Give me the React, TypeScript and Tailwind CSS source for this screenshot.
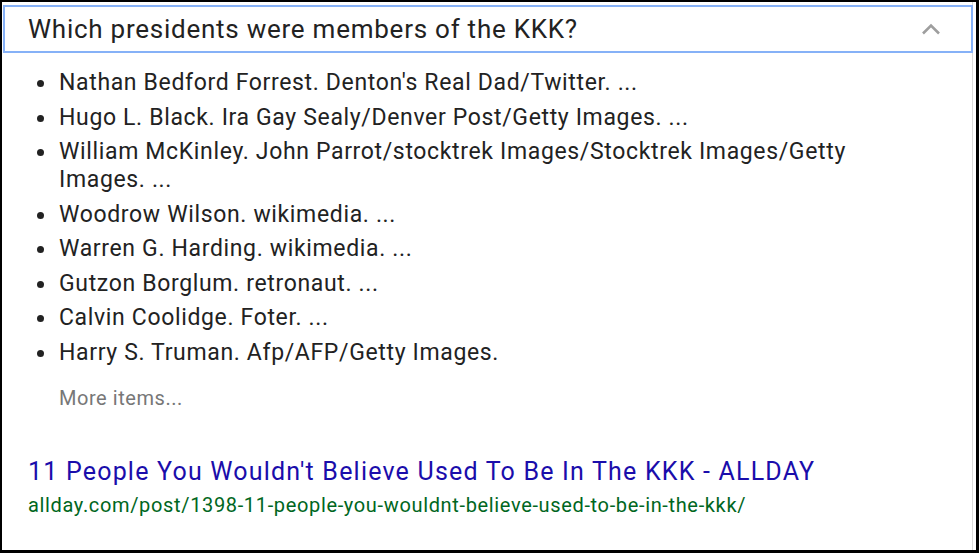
const items = [
  "Nathan Bedford Forrest. Denton's Real Dad/Twitter. ...",
  "Hugo L. Black. Ira Gay Sealy/Denver Post/Getty Images. ...",
  "William McKinley. John Parrot/stocktrek Images/Stocktrek Images/Getty Images. ...",
  "Woodrow Wilson. wikimedia. ...",
  "Warren G. Harding. wikimedia. ...",
  "Gutzon Borglum. retronaut. ...",
  "Calvin Coolidge. Foter. ...",
  "Harry S. Truman. Afp/AFP/Getty Images.",
];

function ChevronUp() {
  return (
    <svg width="20" height="12" viewBox="0 0 20 12" fill="none">
      <path d="M2 10.5 L10 2.5 L18 10.5" stroke="#9e9e9e" strokeWidth="2.6" />
    </svg>
  );
}

export default function App() {
  return (
    <div
      className="w-[979px] h-[553px] bg-white border-black border-t-2 border-l-2 border-r-[3px] border-b-[3px] overflow-hidden"
      style={{ fontFamily: "Roboto, 'Liberation Sans', Arial, sans-serif" }}
    >
      <div className="h-full w-[971px] border-r border-[#dadada] pt-[3px] pl-px">
        {/* question header */}
        <div className="h-[48px] border-2 border-[#86b1f7] flex items-center justify-between pl-[23px] pr-[30px] -mr-px">
          <span className="text-[26px] tracking-[0.75px] text-[#222] leading-none">
            Which presidents were members of the KKK?
          </span>
          <ChevronUp />
        </div>

        <ul className="mt-[16px] pl-[56px] pr-[70px] flex flex-col gap-[6.5px] text-[23px] tracking-[0.65px] leading-[28px] text-[#222]">
          {items.map((t) => (
            <li key={t} className="relative">
              <span className="absolute -left-[22px] top-[11px] w-[7px] h-[7px] rounded-full bg-[#222]" />
              {t}
            </li>
          ))}
        </ul>

        <div className="mt-[17px] pl-[56px] text-[20px] tracking-[0.55px] leading-[28px] text-[#777]">
          More items...
        </div>

        <div className="mt-[44px] pl-[25px]">
          <div className="text-[25px] tracking-[1.2px] leading-[32px] text-[#1a0dab]">
            11 People You Wouldn't Believe Used To Be In The KKK - ALLDAY
          </div>
          <div className="mt-[4px] text-[20px] tracking-[0.65px] leading-[26px] text-[#006621]">
            allday.com/post/1398-11-people-you-wouldnt-believe-used-to-be-in-the-kkk/
          </div>
        </div>
      </div>
    </div>
  );
}
